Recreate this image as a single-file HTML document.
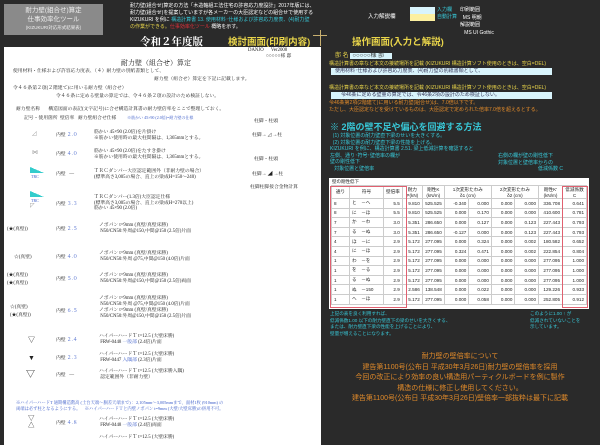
<!DOCTYPE html>
<html><head><meta charset="utf-8"><style>
*{margin:0;padding:0;box-sizing:border-box}
body{width:600px;height:445px;background:#2a2a2a;position:relative;overflow:hidden;font-family:"Liberation Sans","Noto Sans CJK JP",sans-serif;font-size:5.5px;color:#222}
.a{position:absolute;white-space:nowrap}
.s{font-family:"Liberation Serif","Noto Serif CJK SC",serif}
.y{color:#e8d44a}.c{color:#38c8d8}.o{color:#e08a2a}.r{color:#e0303a}.w{color:#fff}
.b{color:#3a5bc8}
table{border-collapse:collapse;font-size:4.6px;color:#222}
td{border:0.5px solid #ccc;height:9.6px;text-align:right;padding:0 2px}
.hd td{height:13px;text-align:center}
</style></head><body>
<div class="a" style="left:4px;top:4px;width:99px;height:31px;background:#8a8a8a;color:#eee;text-align:center;font-size:6.5px;line-height:8.5px;padding-top:3px">耐力壁(組合せ)算定<br>仕事効率化ツール<br><span style="font-size:4.5px">(KIZUKURI対応形式結果表)</span></div>
<div class="a w" style="left:130px;top:3px;font-size:5px;line-height:7px">耐力壁(組合せ)算定の方法「木造軸組工法住宅の許容応力度設計」2017年版には、<br>耐力壁(組合せ)を提案していますが各メーカーの大臣認定などの組合せで使用する<br>KIZUKURI を例に <span class="c">構造計算書 13. 使用材料･仕様および許容応力度表、(4)耐力壁</span><br><span class="y">の作業ができる。</span><span class="r">仕事効率化ツール</span> 概略を示す。</div>
<div class="a w" style="left:368px;top:12px;font-size:5.5px">入力解説欄</div>
<div class="a" style="left:410px;top:7px;width:25px;height:7px;background:#d8f4fc"></div>
<div class="a" style="left:410px;top:14px;width:25px;height:7px;background:#fcf0a0"></div>
<div class="a c" style="left:437px;top:7px;font-size:5px;line-height:7px">入力欄<br>自動計算</div>
<div class="a w" style="left:460px;top:7px;font-size:5px;line-height:7.5px">印刷範囲<br>&nbsp;&nbsp;MS 明朝<br>解説範囲<br>&nbsp;&nbsp;&nbsp;MS UI Gothic</div>
<div class="a w s" style="left:140px;top:34px;font-size:10.5px;font-weight:bold">令和２年度版</div>
<div class="a y" style="left:228px;top:34px;font-size:9.5px;font-weight:bold">検討画面(印刷内容)</div>
<div class="a y" style="left:352px;top:34px;font-size:9.5px;font-weight:bold">操作画面(入力と解説)</div>
<div class="a" style="left:320px;top:30px;width:1px;height:16px;background:#c8b070"></div>
<div class="a" style="left:313px;top:35px;width:14px;height:1px;background:#c8b070"></div>
<div class="a s" style="left:4px;top:47px;width:317px;height:398px;background:#fff"></div>
<div class="a s" style="left:4px;top:47px;width:317px;height:398px;font-size:4.8px;line-height:5.6px">
<div class="a" style="left:244px;top:1px">DANJO&nbsp;&nbsp;&nbsp;&nbsp;&nbsp;&nbsp;Ver2008</div>
<div class="a" style="left:262px;top:7px">○○○○○様 邸</div>
<div class="a" style="left:117px;top:12px;font-size:7px;line-height:8px">耐力壁（組合せ）算定</div>
<div class="a" style="left:9px;top:22px">使用材料・仕様および許容応力度表、（４）耐力壁の別紙書類として、</div>
<div class="a" style="left:150px;top:30px">耐力壁（組合せ）算定を下記に記載します。</div>
<div class="a" style="left:9px;top:39px">令４６条第２項(２階建て)に用いる耐力壁（組合せ）</div>
<div class="a" style="left:52px;top:47px">令４６条に定める壁量の算定では、令４６条２項の設計のため検証しない。</div>
<div class="a" style="left:12px;top:60px">耐力壁名称&nbsp;&nbsp;&nbsp;&nbsp;&nbsp;&nbsp;&nbsp;構造図面の表記(文字記号)に合せ構造計算書の耐力壁倍率をここで整理しておく。</div>
<div class="a" style="left:20px;top:68px">記号・使用箇所&nbsp;&nbsp;壁倍率&nbsp;&nbsp;&nbsp;耐力壁組合せ仕様&nbsp;&nbsp;&nbsp;&nbsp;&nbsp;&nbsp;&nbsp;&nbsp;&nbsp;<span class="b" style="font-size:4px">※筋かい 45×90 (2.0倍)=耐力壁の仕様</span></div>
<div class="a" style="left:28px;top:85px;color:#999;font-size:6px">◿</div><div class="a" style="left:52px;top:86px">内壁 <span class="b">２.０</span></div><div class="a" style="left:90px;top:83px">筋かい 45×90 (2.0倍)を片掛け<br>※筋かい使用時の最大柱間隔は、1,365mmとする。</div>
<div class="a" style="left:28px;top:104px;color:#999;font-size:6px">⋈</div><div class="a" style="left:52px;top:105px">内壁 <span class="b">４.０</span></div><div class="a" style="left:90px;top:102px">筋かい 45×90 (2.0倍)をたすき掛け<br>※筋かい使用時の最大柱間隔は、1,365mmとする。</div>
<div class="a" style="left:26px;top:120px;width:14px;height:6px;background:linear-gradient(to top right,#3cc 50%,transparent 50%)"></div><div class="a b" style="left:27px;top:127px;font-size:4px">TRC</div><div class="a" style="left:52px;top:125px">内壁&nbsp;&nbsp;&nbsp;—</div><div class="a" style="left:90px;top:122px">ＴＲＣダンパー大臣認定範囲外（非耐力壁の場合）<br>(標準高さ3,005の場合、直上の梁成H=150～240)</div>
<div class="a" style="left:26px;top:144px;width:14px;height:6px;background:linear-gradient(to top right,#3cc 50%,transparent 50%)"></div><div class="a b" style="left:27px;top:151px;font-size:4px">TRC</div><div class="a" style="left:26px;top:157px;color:#999;font-size:6px">◸</div><div class="a" style="left:52px;top:155px">内壁 <span class="b">３.３</span></div><div class="a" style="left:90px;top:148px">ＴＲＣダンパー(1.3倍)大臣認定仕様<br>(標準高さ3,005の場合、直上の梁成H=270以上)<br>筋かい 45×90 (2.0倍)</div>
<div class="a" style="left:250px;top:72px">柱脚・柱頭</div><div class="a" style="left:248px;top:86px">柱脚→ ◿ →柱</div>
<div class="a" style="left:250px;top:110px">柱脚・柱頭</div><div class="a" style="left:248px;top:125px">柱脚→ ◢ →柱</div>
<div class="a" style="left:246px;top:138px">柱脚柱脚接合金物計算</div>
<div class="a" style="left:3px;top:180px">(★(真壁))</div><div class="a" style="left:52px;top:180px">内壁 <span class="b">２.５</span></div><div class="a" style="left:95px;top:176px">ノボパン t=9mm (真壁/真壁床勝)<br>&nbsp;N50/CN50:外周@150,中間@150 (2.5倍)片面</div>
<div class="a" style="left:10px;top:208px">☆(真壁)</div><div class="a" style="left:52px;top:208px">内壁 <span class="b">４.０</span></div><div class="a" style="left:95px;top:204px">ノボパン t=9mm (真壁/真壁床勝)<br>&nbsp;N50/CN50:外周 @75,中間@150 (4.0倍)片面</div>
<div class="a" style="left:3px;top:225px;line-height:8px">(★(真壁))<br>(★(真壁))</div><div class="a" style="left:52px;top:230px">内壁 <span class="b">５.０</span></div><div class="a" style="left:95px;top:226px">ノボパン t=9mm (真壁/真壁床勝)<br>&nbsp;N50/CN50:外周@150,中間@150 (2.5倍)両面</div>
<div class="a" style="left:6px;top:257px;line-height:8px">☆(真壁)<br>(★(真壁))</div><div class="a" style="left:52px;top:262px">内壁 <span class="b">６.５</span></div><div class="a" style="left:95px;top:249px;line-height:6px">ノボパン t=9mm (真壁/真壁床勝)<br>&nbsp;N50/CN50:外周 @75,中間@150 (4.0倍)片面<br>ノボパン t=9mm (真壁/真壁床勝)<br>&nbsp;N50/CN50:外周@150,中間@150 (2.5倍)片面</div>
<div class="a" style="left:24px;top:290px;font-size:7px;line-height:7px">▽</div><div class="a" style="left:52px;top:291px">内壁 <span class="b">２.４</span></div><div class="a" style="left:95px;top:287px">ハイパーハードＴ t=12.5 (大壁床勝)<br>&nbsp;FRW-0448 <span class="b">一般部</span> (2.4倍)片面</div>
<div class="a" style="left:24px;top:308px;font-size:7px;line-height:7px">▼</div><div class="a" style="left:52px;top:309px">内壁 <span class="b">２.３</span></div><div class="a" style="left:95px;top:305px">ハイパーハードＴ t=12.5 (大壁床勝)<br>&nbsp;FRW-0447 <span class="b">入隅部</span> (2.3倍)片面</div>
<div class="a" style="left:22px;top:323px;font-size:9px;line-height:9px">▽</div><div class="a" style="left:52px;top:326px">内壁&nbsp;&nbsp;&nbsp;—</div><div class="a" style="left:95px;top:322px">ハイパーハードＴ t=12.5 (大壁床勝入隅)<br>&nbsp;認定範囲外（非耐力壁）</div>
<div class="a b" style="left:12px;top:353px;font-size:4.3px;line-height:6px">※ハイパーハードT 通期構造階高 (土台天端～胴差天端まで) ：2,105mm～3,005mmまで、面材1枚 (910mm) の<br>両端は必ず柱となるようにする。&nbsp;&nbsp;&nbsp;&nbsp;※ハイパーハードＴと内壁ノボパン t=9mm (大壁/大壁床勝)の併用不可。</div>
<div class="a" style="left:24px;top:368px;font-size:6.5px;line-height:7px">▽<br>△</div><div class="a" style="left:52px;top:374px">内壁 <span class="b">４.８</span></div><div class="a" style="left:95px;top:370px">ハイパーハードＴ t=12.5 (大壁床勝)<br>&nbsp;FRW-0448 <span class="b">一般部</span> (2.4倍)両面</div>
<div class="a" style="left:95px;top:388px">ハイパーハードＴ t=12.5 (大壁床勝)</div>
</div>
<div class="a" style="left:327px;top:50px;font-size:5px;line-height:6.5px">
<div class="a y" style="left:8px;top:3px;font-size:6px">邸 名 <span style="background:#d8f4fc;color:#333;padding:0 8px 0 2px">○○○○○様 邸</span></div>
<div class="a y" style="left:2px;top:11px">構造計算書の章など本文の接続場所を記載 (KIZUKURI 構造計算ソフト使用のときは、空白=DEL)</div>
<div class="a" style="left:4px;top:18px;width:221px;height:7px;background:#d8f4fc;color:#335;padding-left:4px">使用材料･仕様および許容応力度表、(4)耐力壁の別紙書類として、</div>
<div class="a y" style="left:2px;top:35px">構造計算書の章など本文の接続場所を記載 (KIZUKURI 構造計算ソフト使用のときは、空白=DEL)</div>
<div class="a" style="left:4px;top:42px;width:221px;height:7px;background:#d8f4fc;color:#335;padding-left:10px">令46条に定める壁量の算定では、令46条2項の設計のため検証しない。</div>
<div class="a o" style="left:2px;top:50px">令46条第2項(2階建て)に用いる耐力壁(組合せ)は、7.0倍以下です。<br>ただし、大臣認定などを受けているものは、大臣認定で定められた倍率7.0倍を超えるとする。</div>
</div>
<div class="a c" style="left:330px;top:120px;font-size:9px;font-weight:bold">※ 2階の壁不足や偏心を回避する方法</div>
<div class="a c" style="left:330px;top:133px;font-size:5px;line-height:6.6px">&nbsp;&nbsp;(1) 対象位置の耐力壁直下梁のせいを大きくする。<br>&nbsp;&nbsp;(2) 対象位置の耐力壁直下梁の性能を上げる。<br>KIZUKURI を例に、構造計算書 2.51. 梁上低減計算を確認すると<br>左側、通り･符号･壁倍率の欄が<br>壁の剛性低下<br>&nbsp;&nbsp;&nbsp;対象位置と壁倍率</div>
<div class="a c" style="left:498px;top:153px;font-size:5px;line-height:6.6px">右側の欄が壁の剛性低下<br>対象位置と壁倍率からの<br><span style="padding-left:40px">低減係数 C</span></div>
<div class="a" style="left:329px;top:178px;width:260px;height:131px;background:#fff"></div>
<div class="a" style="left:332px;top:179px;font-size:4.5px">壁の剛性低下</div>
<table class="a" style="left:331px;top:185px;width:256px">
<tr class="hd"><td style="width:18px">通り</td><td style="width:34px">符号</td><td style="width:17px">壁倍率</td><td style="width:20px">耐力<br>P(kN)</td><td style="width:22px">剛性K<br>(kN/m)</td><td colspan="2">1次変形たわみ<br>δ1 (cm)</td><td colspan="2">2次変形たわみ<br>δ2 (cm)</td><td style="width:24px">剛性K'<br>(kN/m)</td><td style="width:24px">低減係数<br>C</td></tr>
<tr><td style="text-align:left">8</td><td style="text-align:left">と　－へ</td><td>5.5</td><td>9.810</td><td>525.525</td><td>-0.340</td><td>0.000</td><td>0.000</td><td>0.000</td><td>336.708</td><td>0.641</td></tr>
<tr><td style="text-align:left">8</td><td style="text-align:left">に　－ほ</td><td>5.5</td><td>9.810</td><td>525.525</td><td>0.000</td><td>0.170</td><td>0.000</td><td>0.000</td><td>410.600</td><td>0.781</td></tr>
<tr><td style="text-align:left">7</td><td style="text-align:left">か　－わ</td><td>3.0</td><td>5.351</td><td>286.650</td><td>0.000</td><td>0.127</td><td>0.000</td><td>0.123</td><td>227.443</td><td>0.793</td></tr>
<tr><td style="text-align:left">7</td><td style="text-align:left">る　－ぬ</td><td>3.0</td><td>5.351</td><td>286.650</td><td>-0.127</td><td>0.000</td><td>0.000</td><td>0.123</td><td>227.443</td><td>0.793</td></tr>
<tr><td style="text-align:left">4</td><td style="text-align:left">ほ　－に</td><td>2.9</td><td>5.172</td><td>277.095</td><td>0.000</td><td>0.324</td><td>0.000</td><td>0.002</td><td>180.582</td><td>0.652</td></tr>
<tr><td style="text-align:left">4</td><td style="text-align:left">に　－ほ</td><td>2.9</td><td>5.172</td><td>277.095</td><td>0.324</td><td>0.471</td><td>0.000</td><td>0.002</td><td>222.854</td><td>0.804</td></tr>
<tr><td style="text-align:left">1</td><td style="text-align:left">わ　－を</td><td>2.9</td><td>5.172</td><td>277.095</td><td>0.000</td><td>0.000</td><td>0.000</td><td>0.000</td><td>277.095</td><td>1.000</td></tr>
<tr><td style="text-align:left">1</td><td style="text-align:left">を　－る</td><td>2.9</td><td>5.172</td><td>277.095</td><td>0.000</td><td>0.000</td><td>0.000</td><td>0.000</td><td>277.095</td><td>1.000</td></tr>
<tr><td style="text-align:left">1</td><td style="text-align:left">る　－ぬ</td><td>2.9</td><td>5.172</td><td>277.095</td><td>0.000</td><td>0.000</td><td>0.000</td><td>0.000</td><td>277.095</td><td>1.000</td></tr>
<tr><td style="text-align:left">1</td><td style="text-align:left">ぬ　－150</td><td>2.9</td><td>2.586</td><td>138.548</td><td>0.000</td><td>0.022</td><td>0.000</td><td>0.000</td><td>129.226</td><td>0.933</td></tr>
<tr><td style="text-align:left">1</td><td style="text-align:left">へ　－ほ</td><td>2.9</td><td>5.172</td><td>277.095</td><td>0.000</td><td>0.058</td><td>0.000</td><td>0.000</td><td>252.805</td><td>0.912</td></tr>
</table>
<div class="a" style="left:330px;top:186px;width:77px;height:122px;border:1px solid #e06070"></div>
<div class="a" style="left:562px;top:186px;width:26px;height:122px;border:1px solid #e06070"></div>
<div class="a c" style="left:330px;top:311px;font-size:4.6px;line-height:6.5px">上記の表を良く利用すれば、<br>低減係数1.00 以下の耐力壁直下の梁のせいを大きくする、<br>または、耐力壁直下梁の性能を上げることにより、<br>壁量が増えることになります。</div>
<div class="a c" style="left:530px;top:311px;font-size:4.6px;line-height:6.5px">このように1.00 ↑ が<br>低減されていないことを<br>示しています。</div>
<div class="a o" style="left:330px;top:352px;width:260px;text-align:center;font-size:7px;line-height:10.5px">耐力壁の壁倍率について<br>建告第1100号(公布日 平成30年3月26日)耐力壁の壁倍率を採用<br>今回の改正により効率の良い構造用パーティクルボードを例に製作<br>構造の仕様に修正し使用してください。<br>建告第1100号(公布日 平成30年3月26日)壁倍率一部抜粋は最下に記載</div>
</body></html>
